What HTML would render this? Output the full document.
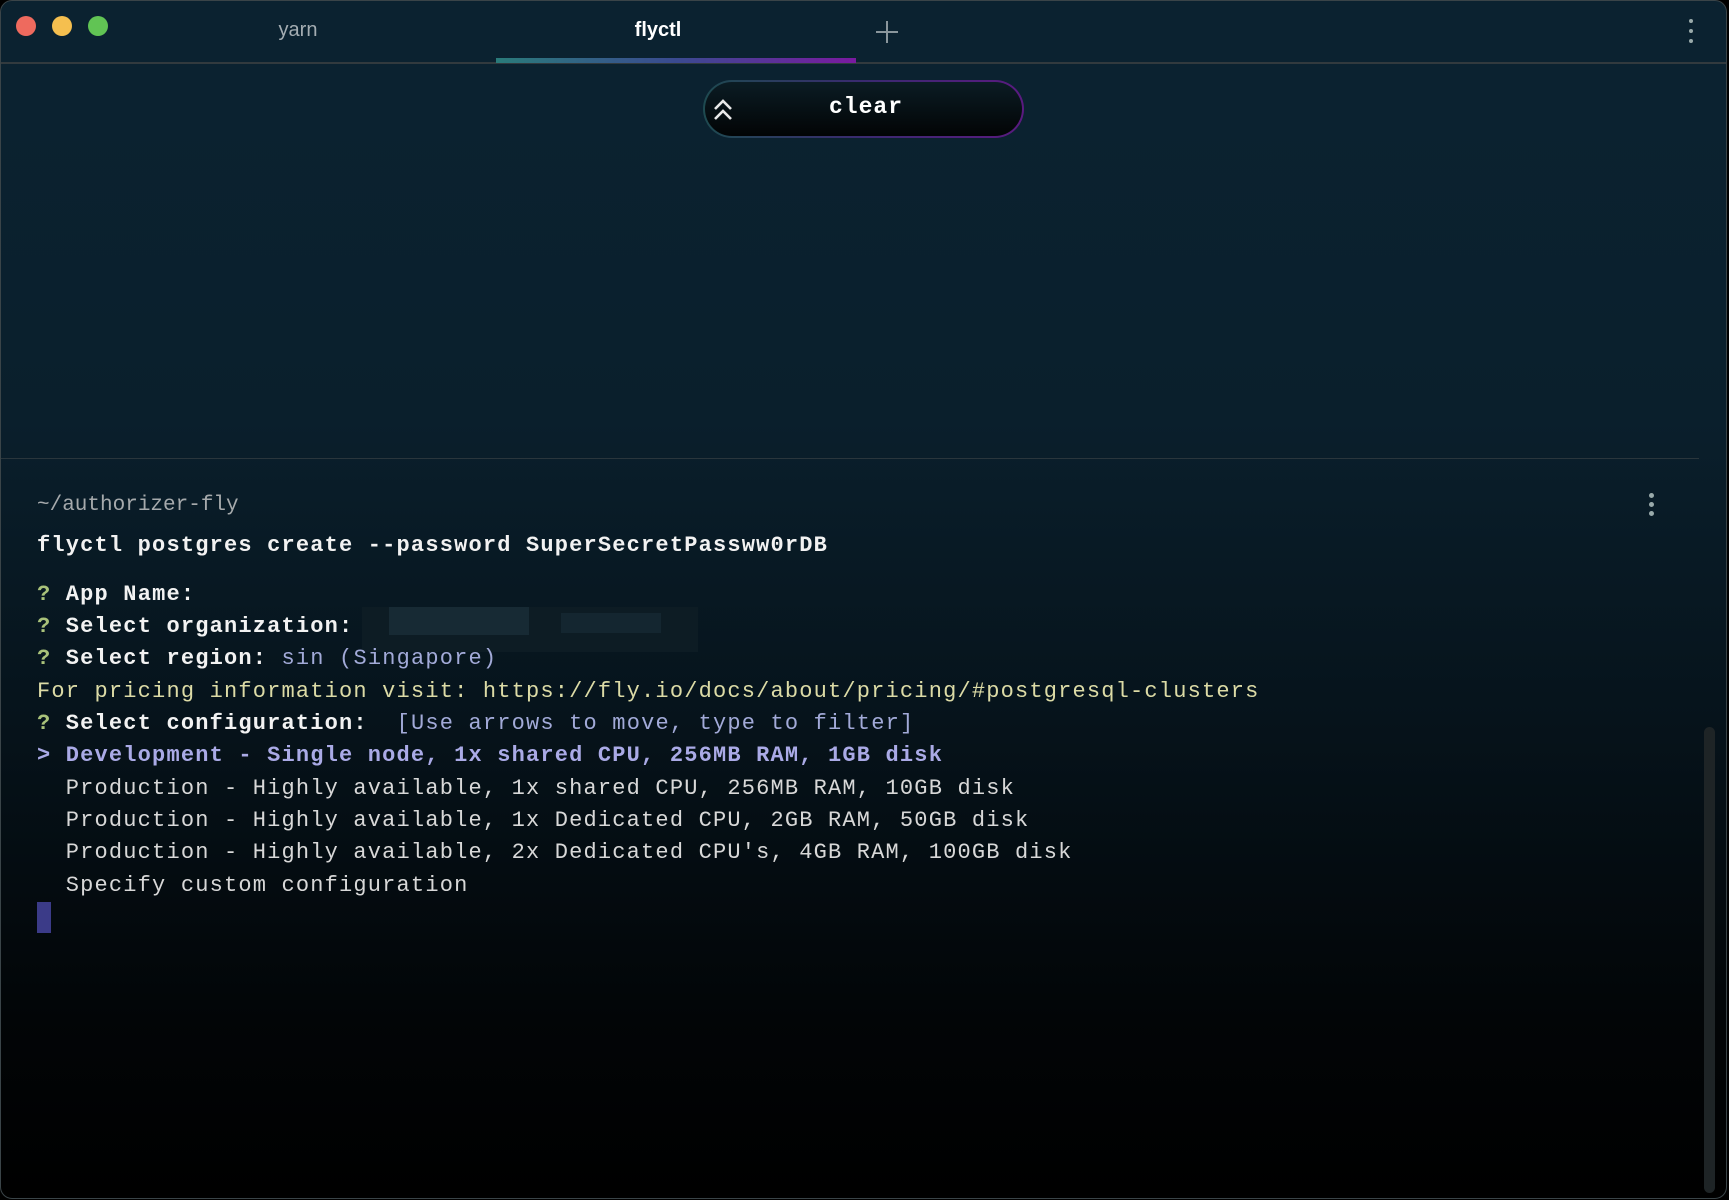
<!DOCTYPE html>
<html><head><meta charset="utf-8"><style>
*{margin:0;padding:0;box-sizing:border-box}
body{width:1729px;height:1200px;overflow:hidden;background:#000;font-family:"Liberation Mono",monospace}
#win{position:absolute;left:0;top:0;width:1727px;height:1199px;border-radius:12px;overflow:hidden;
background:linear-gradient(180deg,#0b2230 0%,#0b2230 8%,#0a1f2c 35%,#06131b 60%,#020507 85%,#000 100%);border:1px solid #3a4448}
.tl{position:absolute;top:15px;width:20px;height:20px;border-radius:50%}
.tab{position:absolute;top:18px;font-family:"Liberation Sans",sans-serif;font-size:20px;transform:translateX(-50%)}
.line{position:absolute;left:36px;font-size:22px;letter-spacing:1.18px;white-space:pre;line-height:24px}
.q{color:#a9c27a;font-weight:bold}
.w{color:#f2f2f2;font-weight:bold}
.b{color:#a2aad8}
.y{color:#dcdba6}
.n{color:#d8d8d8}
.s{color:#aaaae6;font-weight:bold}
</style></head><body>
<div id="win">
<div class="tl" style="left:15px;background:#ee6a5e"></div>
<div class="tl" style="left:51px;background:#f5bf4f"></div>
<div class="tl" style="left:87px;background:#61c454"></div>
<div class="tab" style="left:297px;color:#a4adb2">yarn</div>
<div class="tab" style="left:657px;color:#fff;font-weight:bold">flyctl</div>
<div style="position:absolute;left:875px;top:30px;width:22px;height:2px;background:#8a969c"></div>
<div style="position:absolute;left:885px;top:20px;width:2px;height:22px;background:#8a969c"></div>
<div style="position:absolute;left:1688px;top:18px;width:4px;height:4px;border-radius:50%;background:#9aa;box-shadow:0 10px 0 #9aa,0 20px 0 #9aa"></div>
<div style="position:absolute;left:0;top:61px;width:100%;height:2px;background:#323a3e"></div>
<div style="position:absolute;left:495px;top:57px;width:360px;height:5px;background:linear-gradient(90deg,#2a7b7a,#3a4a90,#7a1aa0)"></div>
<div style="position:absolute;left:702px;top:79px;width:321px;height:58px;border-radius:29px;padding:2px;background:linear-gradient(90deg,#1e4a50,#3a2a70,#5a1a80)">
 <div style="width:100%;height:100%;border-radius:27px;background:linear-gradient(180deg,#0b1c24,#020405)"></div>
</div>
<svg style="position:absolute;left:711px;top:96px" width="22" height="26" viewBox="0 0 22 26"><path d="M3 12 L11 4 L19 12 M3 22 L11 14 L19 22" stroke="#e8e8e8" stroke-width="2.6" fill="none"/></svg>
<div style="position:absolute;left:828px;top:93px;color:#fff;font-weight:bold;font-size:23px;letter-spacing:1px">clear</div>
<div style="position:absolute;left:0;top:457px;width:1698px;height:1px;background:#2a363c"></div>
<div style="position:absolute;left:1648px;top:492px;width:5px;height:5px;border-radius:50%;background:#9aa;box-shadow:0 9px 0 #9aa,0 18px 0 #9aa"></div>
<div style="position:absolute;left:1703px;top:726px;width:11px;height:466px;border-radius:6px;background:#1e2426"></div>

<div class="line" style="top:493px;color:#a6aaac;font-size:21px;letter-spacing:0">~/authorizer-fly</div>
<div class="line w" style="top:533px">flyctl postgres create --password SuperSecretPassww0rDB</div>
<div class="line" style="top:582px"><span class="q">?</span> <span class="w">App Name:</span></div>
<div class="line" style="top:614px"><span class="q">?</span> <span class="w">Select organization:</span></div>
<div style="position:absolute;left:361px;top:606px;width:336px;height:45px;background:#0d1c24"></div>
<div style="position:absolute;left:388px;top:606px;width:140px;height:28px;background:#172a34"></div>
<div style="position:absolute;left:560px;top:612px;width:100px;height:20px;background:#142630"></div>
<div class="line" style="top:646px"><span class="q">?</span> <span class="w">Select region:</span> <span class="b">sin (Singapore)</span></div>
<div class="line y" style="top:679px">For pricing information visit: https://fly.io/docs/about/pricing/#postgresql-clusters</div>
<div class="line" style="top:711px"><span class="q">?</span> <span class="w">Select configuration:</span>  <span class="b">[Use arrows to move, type to filter]</span></div>
<div class="line s" style="top:743px">&gt; Development - Single node, 1x shared CPU, 256MB RAM, 1GB disk</div>
<div class="line n" style="top:776px">  Production - Highly available, 1x shared CPU, 256MB RAM, 10GB disk</div>
<div class="line n" style="top:808px">  Production - Highly available, 1x Dedicated CPU, 2GB RAM, 50GB disk</div>
<div class="line n" style="top:840px">  Production - Highly available, 2x Dedicated CPU's, 4GB RAM, 100GB disk</div>
<div class="line n" style="top:873px">  Specify custom configuration</div>
<div style="position:absolute;left:36px;top:901px;width:14px;height:31px;background:#3b3b88"></div>
</div>
</body></html>
